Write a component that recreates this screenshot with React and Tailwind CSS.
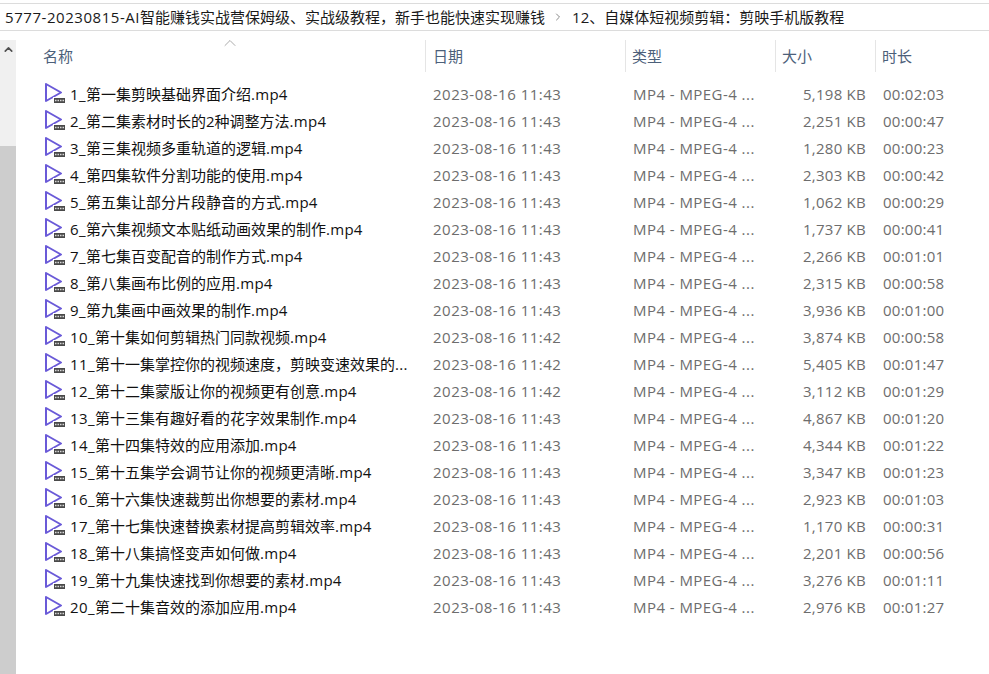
import React from 'react';
import { ChevronUp, ChevronRight } from 'lucide-react';

const files = [
  ['1_', '第一集剪映基础界面介绍', '.mp4', '2023-08-16 11:43', '5,198 KB', '00:02:03'],
  ['2_', '第二集素材时长的2种调整方法', '.mp4', '2023-08-16 11:43', '2,251 KB', '00:00:47'],
  ['3_', '第三集视频多重轨道的逻辑', '.mp4', '2023-08-16 11:43', '1,280 KB', '00:00:23'],
  ['4_', '第四集软件分割功能的使用', '.mp4', '2023-08-16 11:43', '2,303 KB', '00:00:42'],
  ['5_', '第五集让部分片段静音的方式', '.mp4', '2023-08-16 11:43', '1,062 KB', '00:00:29'],
  ['6_', '第六集视频文本贴纸动画效果的制作', '.mp4', '2023-08-16 11:43', '1,737 KB', '00:00:41'],
  ['7_', '第七集百变配音的制作方式', '.mp4', '2023-08-16 11:43', '2,266 KB', '00:01:01'],
  ['8_', '第八集画布比例的应用', '.mp4', '2023-08-16 11:43', '2,315 KB', '00:00:58'],
  ['9_', '第九集画中画效果的制作', '.mp4', '2023-08-16 11:43', '3,936 KB', '00:01:00'],
  ['10_', '第十集如何剪辑热门同款视频', '.mp4', '2023-08-16 11:42', '3,874 KB', '00:00:58'],
  ['11_', '第十一集掌控你的视频速度，剪映变速效果的', '...', '2023-08-16 11:42', '5,405 KB', '00:01:47'],
  ['12_', '第十二集蒙版让你的视频更有创意', '.mp4', '2023-08-16 11:42', '3,112 KB', '00:01:29'],
  ['13_', '第十三集有趣好看的花字效果制作', '.mp4', '2023-08-16 11:43', '4,867 KB', '00:01:20'],
  ['14_', '第十四集特效的应用添加', '.mp4', '2023-08-16 11:43', '4,344 KB', '00:01:22'],
  ['15_', '第十五集学会调节让你的视频更清晰', '.mp4', '2023-08-16 11:43', '3,347 KB', '00:01:23'],
  ['16_', '第十六集快速裁剪出你想要的素材', '.mp4', '2023-08-16 11:43', '2,923 KB', '00:01:03'],
  ['17_', '第十七集快速替换素材提高剪辑效率', '.mp4', '2023-08-16 11:43', '1,170 KB', '00:00:31'],
  ['18_', '第十八集搞怪变声如何做', '.mp4', '2023-08-16 11:43', '2,201 KB', '00:00:56'],
  ['19_', '第十九集快速找到你想要的素材', '.mp4', '2023-08-16 11:43', '3,276 KB', '00:01:11'],
  ['20_', '第二十集音效的添加应用', '.mp4', '2023-08-16 11:43', '2,976 KB', '00:01:27'],
];

const PlayIcon = () => (
  <svg width="20" height="20" viewBox="0 0 20 20" className="mt-[-3px] shrink-0">
    <path d="M1 1 L1 18 L16 9.5 Z" fill="#fff" stroke="#6a5ad8" strokeWidth="2" strokeLinejoin="round" />
    <rect x="8" y="14" width="12" height="6" fill="#fff" />
    <rect x="9" y="15" width="11" height="5" fill="#4a4a4a" />
    <path d="M10 17.5h1.5M12.5 17.5h1.5M15 17.5h1.5M17.5 17.5h1.5" stroke="#d8d8d8" strokeWidth="1.5" />
  </svg>
);

const HeaderCell = ({ children, className }) => (
  <div className={`flex h-8 items-center border-l border-[#e5e5e5] ${className}`}>{children}</div>
);

export default function App() {
  return (
    <div className="flex h-[674px] w-[989px] flex-col overflow-hidden bg-white text-[15px] font-['Open_Sans','Noto_Sans_CJK_SC',sans-serif]">
      {/* Address bar */}
      <div className="mt-[3px] flex h-[28px] items-center whitespace-nowrap border-y border-[#dcdcdc] pl-[5px] text-[#1a1a1a]">
        <span className="tracking-[0.55px]">5777-20230815-AI</span>
        <span>智能赚钱实战营保姆级、实战级教程，新手也能快速实现赚钱</span>
        <ChevronRight size={12} strokeWidth={2} className="ml-[7px] mr-[8px] text-[#8a8a8a]" />
        <span>12、自媒体短视频剪辑：剪映手机版教程</span>
      </div>

      <div className="flex min-h-0 flex-1 pt-[9px]">
        {/* Scrollbar */}
        <div className="flex w-4 shrink-0 flex-col bg-[#f0f0f0]">
          <div className="flex h-[106px] justify-center pt-[3px]">
            <ChevronUp size={13} strokeWidth={3} className="text-[#505050]" />
          </div>
          <div className="flex-1 bg-[#cdcdcd]" />
        </div>

        <div className="min-w-0 flex-1">
          {/* Column headers */}
          <div className="relative flex h-8 text-[#4c607a]">
            <ChevronUp size={20} strokeWidth={0.8} className="absolute left-[204px] top-[-7px] text-[#808080]" />
            <div className="flex h-8 w-[409px] items-center pl-[27px]">名称</div>
            <HeaderCell className="w-[200px] pl-[7px]">日期</HeaderCell>
            <HeaderCell className="w-[150px] pl-[6px]">类型</HeaderCell>
            <HeaderCell className="w-[100px] pl-[6px]">大小</HeaderCell>
            <HeaderCell className="w-[100px] pl-[6px]">时长</HeaderCell>
          </div>

          {/* File rows */}
          <div className="mt-[9px]">
            {files.map((f) => (
              <div key={f[0]} className="flex h-[27px] items-center whitespace-nowrap text-[#6d6d6d]">
                <div className="flex w-[417px] items-center gap-[5px] pl-[29px] text-[#111]">
                  <PlayIcon />
                  <span>
                    <span className="tracking-[0.4px]">{f[0]}</span>
                    {f[1]}
                    <span className="tracking-[0.3px]">{f[2]}</span>
                  </span>
                </div>
                <div className="w-[200px] tracking-[0.5px]">{f[3]}</div>
                <div className="w-[150px] tracking-[0.45px]">MP4 - MPEG-4 ...</div>
                <div className="w-[83px] text-right tracking-[0.25px]">{f[4]}</div>
                <div className="pl-[17px] tracking-[0.25px]">{f[5]}</div>
              </div>
            ))}
          </div>
        </div>
      </div>
    </div>
  );
}
